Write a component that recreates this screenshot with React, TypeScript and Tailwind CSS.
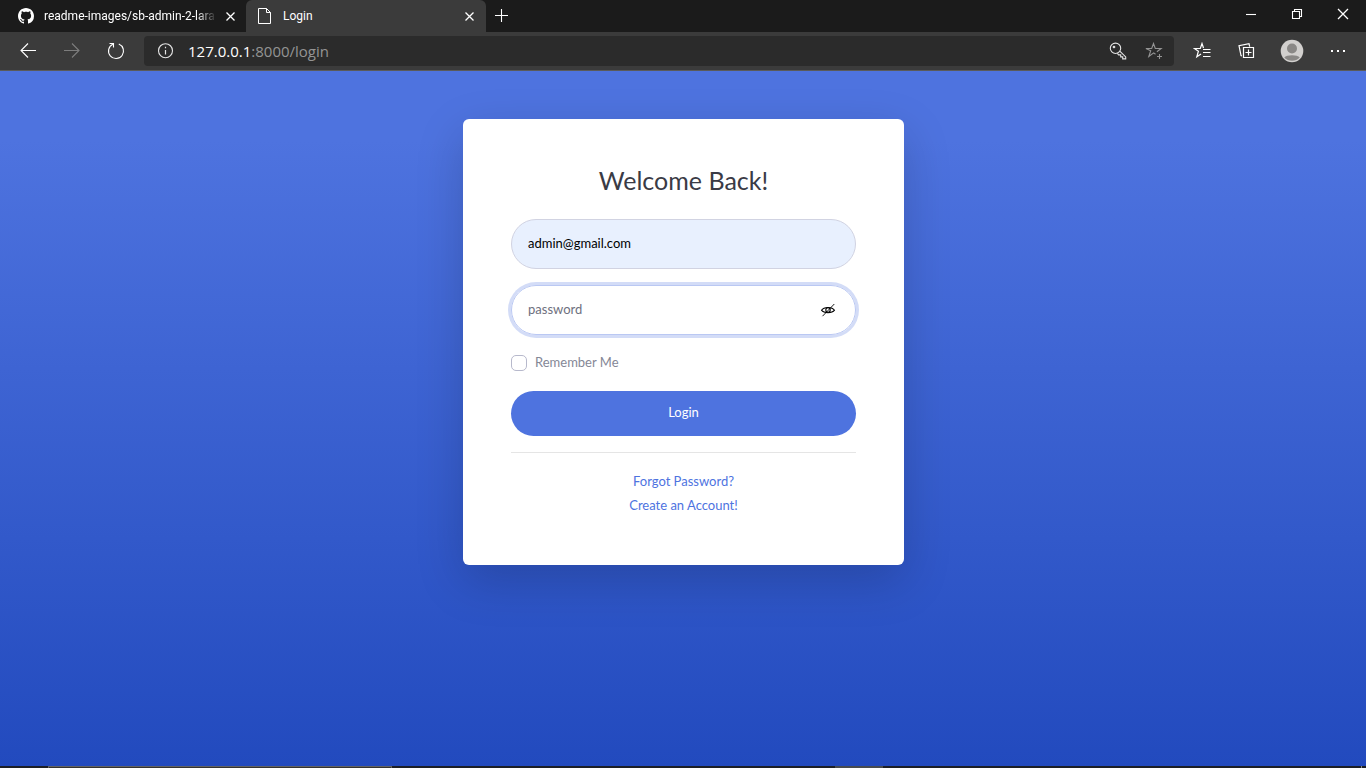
import type { ReactNode } from "react";

type IconProps = { children: ReactNode; className?: string };

function Icon({ children, className = "" }: IconProps) {
  return (
    <svg
      aria-hidden="true"
      width="18"
      height="18"
      viewBox="0 0 18 18"
      fill="none"
      stroke="currentColor"
      strokeWidth="1.1"
      className={`shrink-0 ${className}`}
    >
      {children}
    </svg>
  );
}

function CloseGlyph() {
  return (
    <Icon>
      <path d="M5.500 5.500l8 8M13.500 5.500l-8 8" strokeWidth="1.3" />
    </Icon>
  );
}

type ToolButtonProps = { label: string; className?: string; children: ReactNode };

function ToolButton({ label, className = "w-11", children }: ToolButtonProps) {
  return (
    <button
      type="button"
      aria-label={label}
      className={`flex h-full shrink-0 items-center justify-center ${className}`}
    >
      {children}
    </button>
  );
}

function TabStrip() {
  return (
    <div className="flex h-8 bg-[#1b1b1b] font-['Roboto',sans-serif] text-xs text-white">
      <div className="flex w-[246px] items-center pr-[7px] pl-[18px]">
        <svg aria-hidden="true" width="16" height="16" viewBox="0 0 16 16" fill="currentColor" className="shrink-0">
          <path d="M8 0C3.58 0 0 3.58 0 8c0 3.54 2.29 6.53 5.47 7.59.4.07.55-.17.55-.38 0-.19-.01-.82-.01-1.49-2.01.37-2.53-.49-2.69-.94-.09-.23-.48-.94-.82-1.13-.28-.15-.68-.52-.01-.53.63-.01 1.08.58 1.23.82.72 1.21 1.87.87 2.33.66.07-.52.28-.87.51-1.07-1.78-.2-3.64-.89-3.64-3.95 0-.87.31-1.59.82-2.15-.08-.2-.36-1.02.08-2.12 0 0 .67-.21 2.2.82.64-.18 1.32-.27 2-.27s1.36.09 2 .27c1.53-1.04 2.2-.82 2.2-.82.44 1.1.16 1.92.08 2.12.51.56.82 1.27.82 2.15 0 3.07-1.87 3.75-3.65 3.95.29.25.54.73.54 1.48 0 1.07-.01 1.93-.01 2.2 0 .21.15.46.55.38A8.01 8.01 0 0 0 16 8c0-4.42-3.58-8-8-8Z" />
        </svg>
        <span className="ml-[10px] flex-1 [mask-image:linear-gradient(to_right,black_88%,transparent)] whitespace-nowrap">
          readme-images/sb-admin-2-lara
        </span>
        <button type="button" aria-label="Close tab" className="ml-1">
          <CloseGlyph />
        </button>
      </div>
      <div className="flex w-60 items-center rounded-t-md bg-[#3b3b3b] pr-2 pl-[11px]">
        <svg
          aria-hidden="true"
          width="16"
          height="16"
          viewBox="0 0 16 16"
          fill="none"
          stroke="currentColor"
          className="shrink-0"
        >
          <path d="M1.500.500h8l4 4v11h-12z" />
          <path d="M9.500.500v4h4" />
        </svg>
        <span className="ml-[10px] flex-1">Login</span>
        <button type="button" aria-label="Close tab">
          <CloseGlyph />
        </button>
      </div>
      <button type="button" aria-label="New tab" className="flex w-8 items-center justify-center">
        <Icon>
          <path d="M2 8.500h13M8.500 2v13" />
        </Icon>
      </button>
      <div className="ml-auto flex h-7">
        <ToolButton label="Minimize" className="w-[46px]">
          <Icon>
            <path d="M4 9.500h10" />
          </Icon>
        </ToolButton>
        <ToolButton label="Restore" className="w-[46px]">
          <Icon>
            <path d="M4.500 6.500h7v7h-7zM6.500 6.500v-2h7v7h-2" />
          </Icon>
        </ToolButton>
        <ToolButton label="Close window" className="w-[46px]">
          <Icon>
            <path d="M4 4l10 10M14 4L4 14" strokeWidth="1.3" />
          </Icon>
        </ToolButton>
      </div>
    </div>
  );
}

function Toolbar() {
  return (
    <div className="flex h-[39px] items-center border-b border-[#5a5a5a] bg-[#3b3b3b] px-[6px] text-white">
      <ToolButton label="Back">
        <Icon>
          <path d="M17 8.500H2M9 1.500l-7 7 7 7" />
        </Icon>
      </ToolButton>
      <ToolButton label="Forward" className="w-11 text-[#7d7d7d]">
        <Icon>
          <path d="M1 8.500h15M9 1.500l7 7-7 7" />
        </Icon>
      </ToolButton>
      <ToolButton label="Refresh">
        <Icon>
          <path d="M11.800 2.100A7.500 7.500 0 1 1 5.800 2.300M2.500 1.500h4v4" />
        </Icon>
      </ToolButton>
      <div className="mx-[6px] flex h-[30px] flex-1 items-center rounded-[4px] bg-[#2b2b2b] pr-[2px] pl-3">
        <Icon className="text-[#e4e4e4]">
          <circle cx="9.500" cy="8.700" r="7" />
          <path d="M9.500 8v4.500M9.500 4.800v1.500" strokeWidth="1.200" />
        </Icon>
        <span className="ml-[14px] flex-1 text-[15px] text-[#949494]">
          <span className="text-white">127.0.0.1</span>:8000/login
        </span>
        <ToolButton label="Saved passwords" className="w-9 text-[#e4e4e4]">
          <Icon>
            <circle cx="6.500" cy="6.300" r="5.200" />
            <circle cx="5" cy="5" r=".8" />
            <path d="M10.800 9.200l5.900 5.700v2h-3v-2h-2v-2H9.600l-1.200-1.500" />
          </Icon>
        </ToolButton>
        <ToolButton label="Add to favorites" className="w-9 text-[#949494]">
          <Icon>
            <path d="M10.500 12.200l-1.800-1.300-4.900 3.600 1.900-5.800L.9 6.500h5.800L8.500 1.500l1.800 5h5.800l-4.200 3.200M14.500 12v5M12 14.500h5" />
          </Icon>
        </ToolButton>
      </div>
      <ToolButton label="Favorites">
        <Icon>
          <path d="M8 11.900l-4.200 2.900 1.600-5.600L1.500 6.500h5.800l1.700-5 1.500 4.500M10 7.500h7.500M10 10.500h7.500M10 14.500h7.500" strokeWidth="1.200" />
        </Icon>
      </ToolButton>
      <ToolButton label="Collections">
        <Icon>
          <path d="M5 13.800l-1-.2L2 3.700l10-2 .7 3M6.500 5.500h10v10h-10zM11.500 7.500v6M8.500 10.500h6" strokeWidth="1.200" />
        </Icon>
      </ToolButton>
      <ToolButton label="Profile" className="w-12">
        <svg aria-hidden="true" width="24" height="24" viewBox="0 0 24 24" className="shrink-0">
          <circle cx="12" cy="12" r="11.300" fill="#d2d0ce" />
          <circle cx="12" cy="9.500" r="5" fill="#8a8886" />
          <path d="M4.300 18.500C6.500 15.500 17.500 15.500 19.700 18.500A10.800 10.800 0 0 1 4.300 18.500z" fill="#8a8886" />
        </svg>
      </ToolButton>
      <ToolButton label="Settings and more">
        <Icon>
          <path d="M2 9h2M8 9h2M14 9h2" strokeWidth="2" />
        </Icon>
      </ToolButton>
    </div>
  );
}

function LoginCard() {
  return (
    <div className="w-full max-w-[441px] rounded-md bg-white p-12 font-['Lato',sans-serif] shadow-[0_16px_48px_rgba(0,0,0,0.175)]">
      <h1 className="mb-[26px] text-center text-[25px] leading-[26px] text-[#3a3b45]">Welcome Back!</h1>
      <form className="text-[13px]" onSubmit={(event) => event.preventDefault()}>
        <input
          type="email"
          aria-label="Email address"
          defaultValue="admin@gmail.com"
          className="mb-4 block h-[50px] w-full rounded-full border border-[#d1d3e2] bg-[#e8f0fe] px-4 pb-[2px] text-black outline-none"
        />
        <div className="mb-4 flex h-[50px] items-center rounded-full border border-[#bac8f3] pr-[18px] pl-4 shadow-[0_0_0_3px_rgba(78,115,223,0.25)]">
          <input
            type="password"
            aria-label="Password"
            placeholder="password"
            className="min-w-0 flex-1 text-[#6e707e] outline-none placeholder:text-[#6e707e]"
          />
          <button type="button" aria-label="Show password" className="text-black">
            <Icon>
              <path d="M2.500 9.200C5 5.500 13 5.500 15.500 9.200 13 12.500 5 12.500 2.500 9.200z" />
              <circle cx="9" cy="9" r="2.200" />
              <path d="M3.500 15.200L15.300 3" strokeWidth="0.9" />
            </Icon>
          </button>
        </div>
        <div className="mb-4 flex h-6 items-center gap-2">
          <input
            id="remember"
            type="checkbox"
            className="size-4 appearance-none rounded-[5px] border border-[#b7b9cc] bg-white checked:bg-[#4e73df]"
          />
          <label htmlFor="remember" className="text-[#858796]">
            Remember Me
          </label>
        </div>
        <button type="submit" className="block h-[45px] w-full rounded-full bg-[#4e73df] pb-[2px] text-white">
          Login
        </button>
      </form>
      <hr className="my-4 border-[#e5e5e5]" />
      <div className="flex flex-col items-center text-[13px] leading-6 text-[#4e73df]">
        <a href="#forgot">Forgot Password?</a>
        <a href="#register">Create an Account!</a>
      </div>
    </div>
  );
}

export default function App() {
  return (
    <div className="flex min-h-screen flex-col font-['Open_Sans',sans-serif]">
      <header>
        <TabStrip />
        <Toolbar />
      </header>
      <main className="flex flex-1 items-start justify-center bg-linear-[180deg,#4e73df_10%,#224abe_100%] py-12 pl-px">
        <LoginCard />
      </main>
      <footer className="flex h-[2px] bg-[#1c1f26]">
        <div className="ml-12 w-[344px] border border-b-0 border-[#626262] bg-[#333333]" />
        <div className="ml-[443px] w-12 bg-[#474b50]" />
        <div className="mr-1 ml-auto w-px bg-[#8a8a8a]" />
      </footer>
    </div>
  );
}
